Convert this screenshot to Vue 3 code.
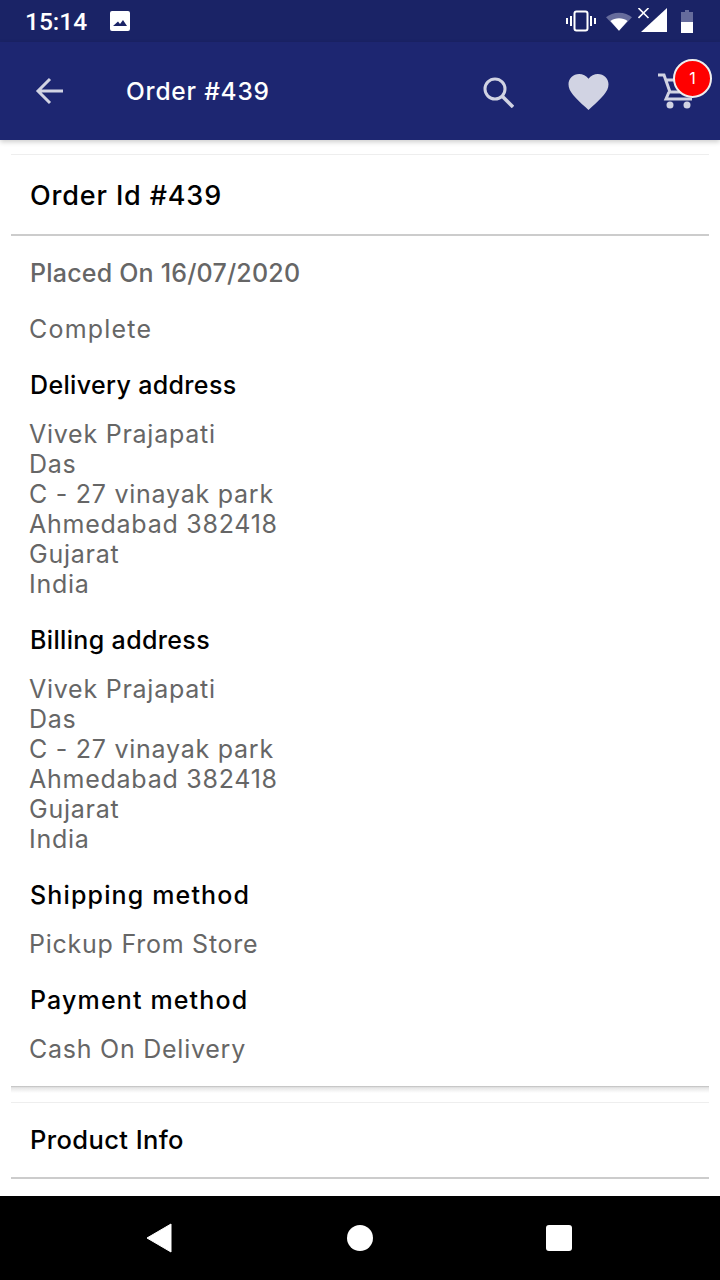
<script setup>
const address = [
  "Vivek Prajapati",
  "Das",
  "C - 27 vinayak park",
  "Ahmedabad 382418",
  "Gujarat",
  "India",
];
</script>

<template>
  <div class="screen">
    <div class="status-bar">
      <span class="time">15:14</span>
      <svg class="pic-icon" width="20" height="20" viewBox="0 0 20 20">
        <path fill="#fff" fill-rule="evenodd" d="M2 0h16a2 2 0 0 1 2 2v16a2 2 0 0 1-2 2H2a2 2 0 0 1-2-2V2a2 2 0 0 1 2-2zM3 15h14l-4-6-3 4-2-2.500z" />
      </svg>
      <div class="status-right">
        <svg width="30" height="22" viewBox="0 0 30 22">
          <rect x="8.500" y="1.500" width="13" height="19" rx="2" fill="none" stroke="#fff" stroke-width="2" />
          <rect x="4" y="6" width="2" height="10" fill="#fff" />
          <rect x="0" y="8" width="2" height="6" fill="#fff" />
          <rect x="24" y="6" width="2" height="10" fill="#fff" />
          <rect x="28" y="8" width="2" height="6" fill="#fff" />
        </svg>
        <svg class="wifi" width="26" height="21" viewBox="0 0 28 22">
          <path fill="#666c9c" d="M0 6.500C3.500 3.500 8.500 1.500 14 1.500s10.500 2 14 5L14 21z" />
          <path fill="#fff" d="M4.800 10.500C7.300 8.700 10.500 7.600 14 7.600s6.700 1.100 9.200 2.900L14 21z" />
        </svg>
        <svg class="signal" width="30" height="26" viewBox="0 0 30 26">
          <path fill="#fff" d="M29 0v24H3z" />
          <path fill="none" stroke="#fff" stroke-width="1.600" d="M0.500 0l10 10M10.500 0l-10 10" />
        </svg>
        <svg class="battery" width="12" height="23" viewBox="0 0 12 23">
          <path fill="#666c9c" d="M4 0h4v2h4v10H0V2h4z" />
          <rect y="12" width="12" height="11" fill="#fff" />
        </svg>
      </div>
    </div>

    <header class="toolbar">
      <svg class="back" width="32" height="30" viewBox="0 0 32 30">
        <path fill="none" stroke="#d1d3e3" stroke-width="3" d="M31 15H6M18 3L6 15l12 12" />
      </svg>
      <h1 class="toolbar-title">Order #439</h1>
      <div class="actions">
        <svg class="search" width="32" height="32" viewBox="0 0 32 32">
          <circle cx="13" cy="13" r="10" fill="none" stroke="#d1d3e3" stroke-width="3" />
          <path fill="none" stroke="#d1d3e3" stroke-width="3.500" d="M20 20l11 11" />
        </svg>
        <svg class="heart" width="41" height="36" viewBox="0 0 24 21.600">
          <path fill="#d1d3e3" d="M12 21.600l-1.740-1.600C4.080 14.400 0 10.700 0 6.200 0 2.600 2.800 0 6.400 0 8.400 0 10.800 1 12 2.800 13.200 1 15.600 0 17.600 0 21.200 0 24 2.600 24 6.200c0 4.500-4.080 8.200-10.260 13.800z" />
        </svg>
        <div class="cart">
          <svg width="36" height="36" viewBox="0 0 36 36">
            <path fill="none" stroke="#d1d3e3" stroke-width="3" d="M0 2h6l6 17h20M8 7h26l-3 12M11 19l-3 7h26" />
            <circle cx="12" cy="32" r="3.500" fill="#d1d3e3" />
            <circle cx="29" cy="32" r="3.500" fill="#d1d3e3" />
          </svg>
          <span class="badge">1</span>
        </div>
      </div>
    </header>

    <main class="content">
      <section class="card">
        <h2 class="card-title">Order Id #439</h2>
        <div class="details">
          <p class="placed">Placed On 16/07/2020</p>
          <p class="line status">Complete</p>

          <h3 class="label">Delivery address</h3>
          <p v-for="line in address" :key="'d' + line" class="line">{{ line }}</p>

          <h3 class="label">Billing address</h3>
          <p v-for="line in address" :key="'b' + line" class="line">{{ line }}</p>

          <h3 class="label wide">Shipping method</h3>
          <p class="line">Pickup From Store</p>

          <h3 class="label wide">Payment method</h3>
          <p class="line">Cash On Delivery</p>
        </div>
        <div class="card-shadow"></div>
      </section>

      <section class="card product">
        <h2 class="card-title">Product Info</h2>
      </section>
    </main>

    <nav class="nav-bar">
      <svg width="26" height="30" viewBox="0 0 26 30"><path fill="#fff" d="M25 1v28L1 15z" stroke="#fff" stroke-linejoin="round" /></svg>
      <span class="nav-circle"></span>
      <span class="nav-square"></span>
    </nav>
  </div>
</template>

<style scoped>
.screen {
  width: 720px;
  height: 1280px;
  display: flex;
  flex-direction: column;
  overflow: hidden;
  background: #fff;
  font-family: Inter, "Open Sans", sans-serif;
}

.status-bar {
  height: 42px;
  flex: none;
  display: flex;
  align-items: center;
  padding: 0 27px 0 25px;
  background: #1a2366;
  color: #fff;
}

.time {
  font-family: Roboto, sans-serif;
  font-size: 24.500px;
  font-weight: 500;
}

.pic-icon {
  margin-left: 23px;
  margin-top: -1px;
}

.status-right {
  margin-left: auto;
  display: flex;
  align-items: center;
}

.wifi {
  margin-left: 10px;
}

.signal {
  margin-left: 6px;
}

.battery {
  margin-left: 13px;
}

.toolbar {
  height: 98px;
  flex: none;
  display: flex;
  align-items: center;
  padding: 0 6px 0 32px;
  background: #1d2671;
  box-shadow: 0 2px 5px rgba(0, 0, 0, 0.2);
  position: relative;
  z-index: 1;
}

.back {
  flex: none;
}

.toolbar-title {
  margin: 0 0 0 62px;
  color: #fff;
  font-size: 24.500px;
  font-weight: 500;
  letter-spacing: 0.8px;
}

.actions {
  margin-left: auto;
  display: flex;
  align-items: center;
}

.search {
  margin-top: 1px;
}

.heart {
  margin-left: 54px;
  margin-top: 1px;
}

.cart {
  margin-left: 49px;
  width: 56px;
  height: 38px;
  position: relative;
  margin-top: 1px;
}

.badge {
  position: absolute;
  top: -14px;
  right: 2px;
  width: 35px;
  height: 35px;
  box-sizing: content-box;
  border: 2px solid #eee;
  border-radius: 50%;
  background: #f00;
  color: #fff;
  font-size: 16px;
  line-height: 35px;
  text-align: center;
}

.content {
  flex: 1;
  min-height: 0;
  overflow: hidden;
  padding: 14px 11px 0;
}

.card {
  border-top: 1px solid #eee;
}

.card-title {
  margin: 0;
  height: 78px;
  padding: 1px 0 0 19px;
  display: flex;
  align-items: center;
  border-bottom: 2px solid #ccc;
  color: #000;
  font-size: 27px;
  font-weight: 500;
  letter-spacing: 0.85px;
}

.details {
  padding: 20px 19px 22px;
}

.placed {
  margin: 0;
  line-height: 34px;
  color: #666;
  font-size: 25px;
  font-weight: 500;
  letter-spacing: 0.2px;
}

.line {
  margin: 0 0 0 -1px;
  line-height: 30px;
  color: #666;
  font-size: 25px;
  letter-spacing: 0.75px;
}

.status {
  margin-top: 24px;
  letter-spacing: 1.200px;
}

.label {
  margin: 26px 0 19px;
  line-height: 30px;
  color: #000;
  font-size: 25px;
  font-weight: 500;
  letter-spacing: 0.35px;
}

.wide {
  letter-spacing: 1.150px;
}

.card-shadow {
  height: 7px;
  background: linear-gradient(#bbb, #e6e6e6 25%, #fff);
}

.product {
  margin-top: 9px;
}

.product .card-title {
  height: 72px;
  padding-top: 0;
  padding-bottom: 2px;
  font-size: 25.500px;
  letter-spacing: 0.4px;
}

.nav-bar {
  height: 84px;
  flex: none;
  display: flex;
  align-items: center;
  background: #000;
}

.nav-bar svg {
  margin-left: 146px;
  margin-right: 175px;
}

.nav-circle {
  width: 26px;
  height: 26px;
  border-radius: 50%;
  background: #fff;
}

.nav-square {
  width: 26px;
  height: 26px;
  margin-left: 173px;
  border-radius: 3px;
  background: #fff;
}
</style>
